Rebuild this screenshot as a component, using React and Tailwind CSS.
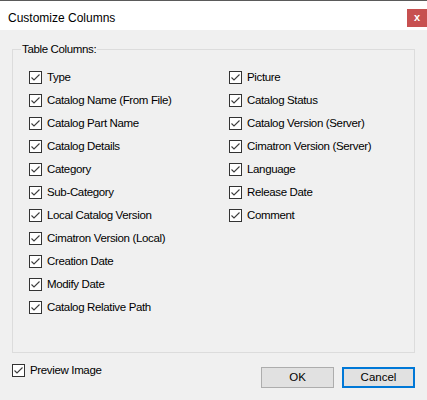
import React, { useState } from 'react';

const leftColumns = [
  'Type',
  'Catalog Name (From File)',
  'Catalog Part Name',
  'Catalog Details',
  'Category',
  'Sub-Category',
  'Local Catalog Version',
  'Cimatron Version (Local)',
  'Creation Date',
  'Modify Date',
  'Catalog Relative Path',
];

const rightColumns = [
  'Picture',
  'Catalog Status',
  'Catalog Version (Server)',
  'Cimatron Version (Server)',
  'Language',
  'Release Date',
  'Comment',
];

function CheckBox({ label, checked, onChange }) {
  return (
    <label className="flex items-center h-[23px] cursor-default select-none">
      <span
        onClick={onChange}
        className="w-[13px] h-[13px] border border-[#333333] bg-white flex items-center justify-center shrink-0"
      >
        {checked && (
          <svg width="11" height="11" viewBox="0 0 11 11">
            <path d="M1.5 5.5 L4 8 L9.5 2.5" fill="none" stroke="#3c3c3c" strokeWidth="1.1" />
          </svg>
        )}
      </span>
      <span className="ml-[5px] text-[11.5px] tracking-[-0.35px] text-black">{label}</span>
    </label>
  );
}

export default function App() {
  const [checked, setChecked] = useState(() => {
    const all = {};
    [...leftColumns, ...rightColumns, 'Preview Image'].forEach((c) => (all[c] = true));
    return all;
  });

  const toggle = (name) => setChecked((prev) => ({ ...prev, [name]: !prev[name] }));

  return (
    <div
      className="w-[427px] h-[400px] bg-[#f0f0f0] flex flex-col overflow-hidden"
      style={{ fontFamily: '"Liberation Sans", Arial, sans-serif' }}
    >
      {/* Title bar */}
      <div className="h-[30px] bg-white border-t border-[#5a5a5a] flex items-start justify-between shrink-0">
        <div className="pl-[8px] pt-[8px] text-[12px] text-black">Customize Columns</div>
        <button className="mt-[8px] w-[20px] h-[18px] bg-[#c75050] flex items-center justify-center">
          <span className="text-white text-[11px] font-bold leading-none mb-px">x</span>
        </button>
      </div>

      {/* Body */}
      <div className="flex-1 px-[12px] pt-[19px]">
        <div className="relative h-[304px] w-[403px] border border-[#dcdcdc]">
          <span className="absolute -top-[8px] left-[8px] px-[1px] bg-[#f0f0f0] text-[11.5px] tracking-[-0.35px] leading-[14px] text-black">
            Table Columns:
          </span>
          <div className="flex pl-[16px] pt-[16px]">
            <div className="w-[200px] flex flex-col">
              {leftColumns.map((c) => (
                <CheckBox key={c} label={c} checked={checked[c]} onChange={() => toggle(c)} />
              ))}
            </div>
            <div className="flex flex-col">
              {rightColumns.map((c) => (
                <CheckBox key={c} label={c} checked={checked[c]} onChange={() => toggle(c)} />
              ))}
            </div>
          </div>
        </div>

        <div className="flex items-start justify-between mt-[6px]">
          <div>
            <CheckBox
              label="Preview Image"
              checked={checked['Preview Image']}
              onChange={() => toggle('Preview Image')}
            />
          </div>
          <div className="flex gap-[8px] mt-[8px]">
            <button className="w-[73px] h-[21px] bg-[#e1e1e1] border border-[#adadad] text-[11.5px] text-black">
              OK
            </button>
            <button className="w-[73px] h-[21px] bg-[#e1e1e1] border-2 border-[#0078d7] text-[11.5px] text-black">
              Cancel
            </button>
          </div>
        </div>
      </div>
    </div>
  );
}
